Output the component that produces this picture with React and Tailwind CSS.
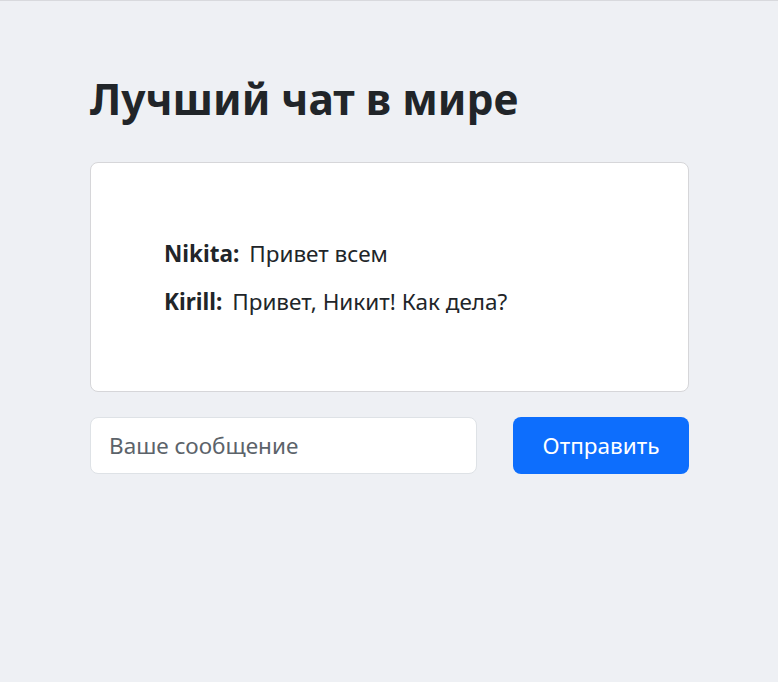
const messages = [
  { author: 'Nikita', text: 'Привет всем' },
  { author: 'Kirill', text: 'Привет, Никит! Как дела?' },
];

export default function App() {
  return (
    <div
      className="min-h-screen border-t border-[#d8d9dd] bg-[#eef0f4] text-[#212529]"
      style={{ fontFamily: '"Noto Sans", "Open Sans", sans-serif' }}
    >
      <div className="ml-[90px] w-[599px] pt-[72px]">
        <h1 className="mb-[38px] text-[42.5px] font-bold leading-[51px]">Лучший чат в мире</h1>

        <div className="flex flex-col gap-[18px] rounded-lg border border-[#d6d6d9] bg-white pl-[73px] pr-6 pt-[76px] pb-[74px]">
          {messages.map((m) => (
            <p key={m.author} className="text-[22.5px] leading-[30px]">
              <span className="font-bold">{m.author}:</span>
              <span className="ml-[10px]">{m.text}</span>
            </p>
          ))}
        </div>

        <div className="mt-[25px] flex items-center justify-between">
          <input
            className="h-[57px] w-[387px] rounded-lg border border-[#dee2e6] bg-white px-[18px] text-[22.5px] outline-none placeholder:text-[#5c636a]"
            placeholder="Ваше сообщение"
          />
          <button
            type="button"
            className="h-[57px] w-[176px] rounded-lg bg-[#0d6efd] text-[22.5px] text-white"
          >
            Отправить
          </button>
        </div>
      </div>
    </div>
  );
}
